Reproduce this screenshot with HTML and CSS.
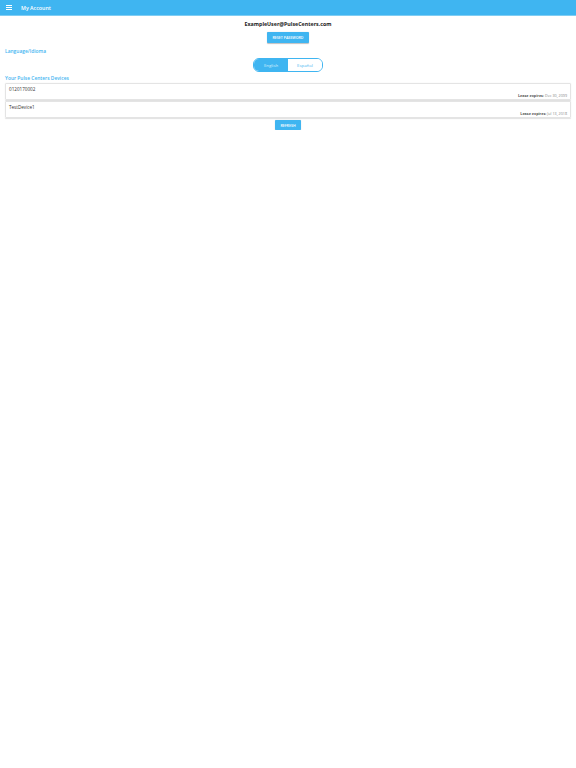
FILE: index.html
```html
<!DOCTYPE html>
<html>
<head>
<meta charset="utf-8">
<link rel="stylesheet" href="styles.css">
</head>
<body>
<header class="topbar">
  <span class="menu"><i></i><i></i><i></i></span>
  <span class="title">My Account</span>
</header>
<main class="content">
  <div class="email">ExampleUser@PulseCenters.com</div>
  <div class="center"><button class="btn reset">RESET PASSWORD</button></div>
  <div class="section-label">Language/Idioma</div>
  <div class="center">
    <div class="segment">
      <span class="seg active">English</span>
      <span class="seg">Español</span>
    </div>
  </div>
  <div class="section-label devices-label">Your Pulse Centers Devices</div>
  <div class="devices">
    <div class="device">
      <div class="name">0120170002</div>
      <div class="lease"><b>Lease expires:</b> Dec 30, 2099</div>
    </div>
    <div class="device">
      <div class="name">TestDevice1</div>
      <div class="lease"><b>Lease expires:</b> Jul 13, 2018</div>
    </div>
  </div>
  <div class="center"><button class="btn refresh">REFRESH</button></div>
</main>
</body>
</html>
```
FILE: styles.css
```css
html, body { margin: 0; padding: 0; background: #fff; }
body { font-family: "Open Sans", "DejaVu Sans", sans-serif; color: #222; }
.topbar {
  height: 16px;
  background: #3fb5f1;
  border-bottom: 1px solid #7fcdf3;
  display: flex;
  align-items: center;
  box-sizing: border-box;
  padding-left: 6px;
}
.menu { display: flex; flex-direction: column; gap: 1px; width: 6px; margin-right: 9px; }
.menu i { display: block; height: 1px; background: #fff; }
.title { color: #fff; font-size: 5.3px; font-weight: 600; }
.content { padding: 0 5px; }
.email { text-align: center; font-size: 5.3px; font-weight: 700; margin-top: 3px; height: 10px; line-height: 10px; color: #222; }
.center { display: flex; justify-content: center; }
.btn {
  background: #3fb5f1; color: #fff; border: none; font-family: inherit;
  font-size: 3.6px; font-weight: 600; padding: 0; border-radius: 1px;
  box-shadow: 0 0.5px 1px rgba(0,0,0,0.25);
}
.reset { width: 42px; height: 11px; margin-top: 3px; }
.section-label { color: #3fb5f1; font-size: 4.9px; font-weight: 600; margin-top: 4px; height: 8px; line-height: 8px; }
.segment {
  margin-top: 3px;
  display: flex; width: 70px; height: 14px; box-sizing: border-box;
  border: 1px solid #3fb5f1; border-radius: 6px; overflow: hidden;
}
.seg { flex: 1; display: flex; align-items: center; justify-content: center; font-size: 4.3px; color: #3fb5f1; background: #fff; }
.seg.active { background: #3fb5f1; color: #d8f0fc; }
.devices-label { margin-top: 2px; }
.devices { display: flex; flex-direction: column; gap: 1px; margin-top: 1px; }
.device {
  height: 17px; box-sizing: border-box; border: 1px solid #e4e4e4; border-radius: 1px;
  box-shadow: 0 0.5px 1px rgba(0,0,0,0.12);
  padding: 2px 3px 1px 3px; display: flex; flex-direction: column; justify-content: space-between;
}
.name { font-size: 4.6px; color: #333; line-height: 6px; }
.lease { font-size: 3.7px; color: #888; text-align: right; line-height: 5px; }
.lease b { color: #555; font-weight: 700; }
.refresh { width: 26px; height: 10px; margin-top: 2px; }
```
